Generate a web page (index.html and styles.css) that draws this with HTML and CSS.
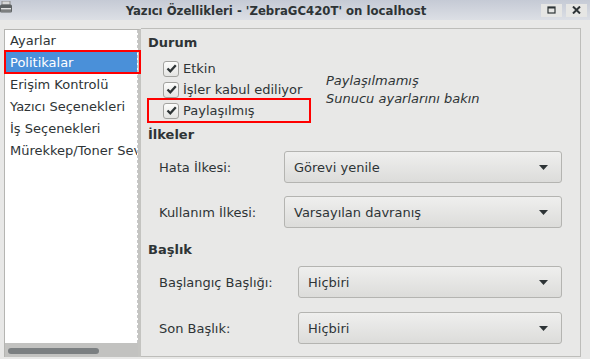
FILE: index.html
```html
<!DOCTYPE html>
<html lang="tr">
<head>
    <meta charset="UTF-8">
    <title>Yazıcı Özellikleri</title>
    <link rel="stylesheet" href="styles.css">
</head>
<body>
    <div class="window">
        <header class="titlebar">
            <span class="app-icon">
                <svg width="12" height="14" viewBox="0 0 12 14">
                    <rect x="2" y="0" width="8" height="4" fill="#d8d8d8" stroke="#8a8a8a" stroke-width="1"/>
                    <rect x="0" y="3.5" width="12" height="8" rx="1.5" fill="#5e6264"/>
                    <rect x="1" y="7" width="10" height="1.5" fill="#e2e2e2"/>
                    <rect x="1" y="9.5" width="10" height="1" fill="#9a9c9e"/>
                </svg>
            </span>
            <h1 class="title">Yazıcı Özellikleri - 'ZebraGC420T' on localhost</h1>
            <div class="wm-buttons">
                <span class="wm-btn">
                    <svg width="9" height="8" viewBox="0 0 9 8"><rect x="1" y="1" width="7" height="6" fill="none" stroke="#2e3436" stroke-width="1.2"/><rect x="1" y="1" width="7" height="1.5" fill="#2e3436"/></svg>
                </span>
                <span class="wm-btn">
                    <svg width="9" height="8" viewBox="0 0 9 8"><path d="M1 0.5 L8 7.5 M8 0.5 L1 7.5" stroke="#2e3436" stroke-width="2"/></svg>
                </span>
            </div>
        </header>

        <div class="content">
            <aside class="sidebar">
                <ul class="pages">
                    <li>Ayarlar</li>
                    <li class="selected">Politikalar</li>
                    <li>Erişim Kontrolü</li>
                    <li>Yazıcı Seçenekleri</li>
                    <li>İş Seçenekleri</li>
                    <li>Mürekkep/Toner Seviyeleri</li>
                </ul>
                <div class="hscroll"><div class="thumb"></div></div>
            </aside>

            <main class="panel">
                <section class="group">
                    <h2>Durum</h2>
                    <div class="status">
                        <ul class="checks">
                            <li class="check"><span class="box"><svg width="13" height="13" viewBox="0 0 13 13"><path d="M2.5 6.5 L5.3 9.3 L10.8 3.3" fill="none" stroke="#2e3436" stroke-width="2.3"/></svg></span>Etkin</li>
                            <li class="check"><span class="box"><svg width="13" height="13" viewBox="0 0 13 13"><path d="M2.5 6.5 L5.3 9.3 L10.8 3.3" fill="none" stroke="#2e3436" stroke-width="2.3"/></svg></span>İşler kabul ediliyor</li>
                            <li class="check marked"><span class="box"><svg width="13" height="13" viewBox="0 0 13 13"><path d="M2.5 6.5 L5.3 9.3 L10.8 3.3" fill="none" stroke="#2e3436" stroke-width="2.3"/></svg></span>Paylaşılmış</li>
                        </ul>
                        <p class="note">Paylaşılmamış<br>Sunucu ayarlarını bakın</p>
                    </div>
                </section>

                <section class="group policies">
                    <h2>İlkeler</h2>
                    <div class="form">
                        <label>Hata İlkesi:</label>
                        <div class="combo"><span>Görevi yenile</span><svg width="9" height="5" viewBox="0 0 9 5"><path d="M0 0 H9 L4.5 5 Z" fill="#2e3436"/></svg></div>
                        <label>Kullanım İlkesi:</label>
                        <div class="combo"><span>Varsayılan davranış</span><svg width="9" height="5" viewBox="0 0 9 5"><path d="M0 0 H9 L4.5 5 Z" fill="#2e3436"/></svg></div>
                    </div>
                </section>

                <section class="group banners">
                    <h2>Başlık</h2>
                    <div class="form">
                        <label>Başlangıç Başlığı:</label>
                        <div class="combo"><span>Hiçbiri</span><svg width="9" height="5" viewBox="0 0 9 5"><path d="M0 0 H9 L4.5 5 Z" fill="#2e3436"/></svg></div>
                        <label>Son Başlık:</label>
                        <div class="combo"><span>Hiçbiri</span><svg width="9" height="5" viewBox="0 0 9 5"><path d="M0 0 H9 L4.5 5 Z" fill="#2e3436"/></svg></div>
                    </div>
                </section>
            </main>
        </div>
    </div>
</body>
</html>
```

FILE: styles.css
```css
* {
    margin: 0;
    padding: 0;
    box-sizing: border-box;
}

body {
    background-color: #e8e8e7;
    color: #2e3436;
    font-family: "DejaVu Sans", sans-serif;
    font-size: 13px;
    width: 590px;
    height: 359px;
    overflow: hidden;
}

/* window title */
.titlebar {
    display: flex;
    align-items: center;
    height: 20px;
    background: linear-gradient(#c5cad5, #dcdfe5);
}

.app-icon {
    width: 12px;
    height: 20px;
    display: flex;
    align-items: flex-start;
    padding-top: 1px;
}

.title {
    flex: 1;
    text-align: center;
    font-family: "DejaVu Sans Condensed", "DejaVu Sans", sans-serif;
    font-size: 13px;
    font-weight: bold;
}

.wm-buttons {
    display: flex;
    gap: 4px;
    padding: 0 3px 0 1px;
}

.wm-btn {
    width: 21px;
    height: 13px;
    background: #e6e6e4;
    display: flex;
    align-items: center;
    justify-content: center;
}

.content {
    display: flex;
    height: 339px;
    padding: 8px 9px 2px 4px;
}

/* page list */
.sidebar {
    width: 137px;
    margin-top: 1px;
    display: flex;
    flex-direction: column;
    background: #fff;
    border-left: 1px solid #b5b5b2;
    border-top: 1px solid #b5b5b2;
    border-right: 3px solid #c4c4c1;
}

.pages {
    flex: 1;
    list-style: none;
    border-right: 1px dashed #c8c8c8;
}

.pages li {
    height: 22px;
    line-height: 22px;
    padding-left: 5px;
    white-space: nowrap;
    overflow: hidden;
}

.pages li.selected {
    position: relative;
    overflow: visible;
    background: #4a90d9;
    color: #fff;
}

.pages li.selected::after {
    content: "";
    position: absolute;
    left: -1px;
    right: -4px;
    top: -2px;
    bottom: 0;
    border: 2px solid #f00;
}

.hscroll {
    height: 14px;
    background: #c2c2c0;
    padding: 5px 0 0 3px;
}

.thumb {
    width: 91px;
    height: 6px;
    border-radius: 3px;
    background: #7b7f81;
}

/* settings panel */
.panel {
    flex: 1;
    border: 1px solid #bdbdba;
    border-left: none;
    padding: 6px 18px 0 7px;
}

.group h2 {
    font-size: 13px;
    font-weight: bold;
    line-height: 16px;
}

.status {
    display: flex;
    align-items: center;
    margin-top: 7px;
}

.checks {
    list-style: none;
    width: 178px;
    padding-left: 15px;
}

.check {
    display: flex;
    align-items: center;
    gap: 4px;
    height: 21px;
    white-space: nowrap;
}

.check.marked {
    position: relative;
}

.check.marked::after {
    content: "";
    position: absolute;
    left: -16px;
    width: 160px;
    top: -2px;
    bottom: -2px;
    border: 2px solid #f00;
}

.box {
    width: 16px;
    height: 16px;
    border: 1px solid #a3a3a0;
    border-radius: 3px;
    background: linear-gradient(#fdfdfc, #e4e4e2);
    display: flex;
    align-items: center;
    justify-content: center;
}

.note {
    font-style: italic;
    line-height: 18px;
}

.policies {
    margin-top: 6px;
}

.banners {
    margin-top: 14px;
}

.form {
    display: grid;
    grid-template-columns: 125px 1fr;
    row-gap: 13px;
    align-items: center;
    padding-left: 11px;
    margin-top: 8px;
}

.banners .form {
    grid-template-columns: 139px 1fr;
    row-gap: 14px;
}

.combo {
    height: 32px;
    display: flex;
    align-items: center;
    justify-content: space-between;
    padding: 0 13px 0 9px;
    border: 1px solid #b4b4b1;
    border-radius: 3px;
    background: linear-gradient(#efefee, #dcdcda);
}
```
